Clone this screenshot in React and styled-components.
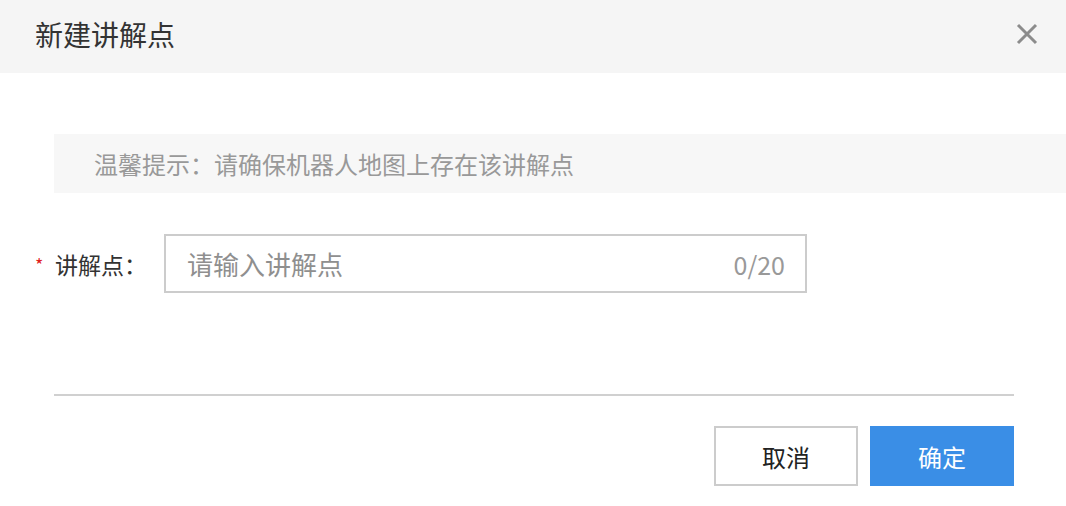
import React from "react";
import styled, { createGlobalStyle } from "styled-components";

const GlobalStyle = createGlobalStyle`
  body {
    margin: 0;
    background: #fff;
    font-family: "Noto Sans CJK SC", "Noto Sans", sans-serif;
  }
`;

const Dialog = styled.div`
  width: 1066px;
  height: 506px;
  background: #fff;
  overflow: hidden;
`;

const Header = styled.div`
  height: 73px;
  background: #f5f5f5;
  display: flex;
  align-items: center;
  justify-content: space-between;
  padding: 0 28px 6px 35px;
  box-sizing: border-box;
`;

const Title = styled.div`
  font-size: 28px;
  color: #333;
  line-height: 1;
`;

const CloseButton = styled.button`
  border: none;
  background: none;
  padding: 0;
  display: flex;
  cursor: pointer;
`;

const Body = styled.div`
  padding: 61px 0 0 54px;
`;

const Tip = styled.div`
  height: 59px;
  background: #f7f7f7;
  display: flex;
  align-items: center;
  padding-left: 40px;
  font-size: 24px;
  color: #999;
`;

const FormRow = styled.div`
  display: flex;
  align-items: center;
  margin: 41px 0 0 -19px;
`;

const Label = styled.label`
  width: 129px;
  display: flex;
  align-items: center;
  font-size: 23px;
  color: #333;
`;

const Required = styled.span`
  color: #e02020;
  font-size: 18px;
  width: 20px;
`;

const InputBox = styled.div`
  width: 643px;
  height: 59px;
  border: 2px solid #ccc;
  box-sizing: border-box;
  display: flex;
  align-items: center;
  padding: 0 20px 0 21px;
`;

const Input = styled.input`
  flex: 1;
  border: none;
  outline: none;
  background: transparent;
  font-family: inherit;
  font-size: 26px;
  color: #333;
  padding: 0;
  &::placeholder {
    color: #8f8f8f;
  }
`;

const Counter = styled.span`
  font-size: 25px;
  color: #999;
`;

const Divider = styled.div`
  width: 960px;
  height: 2px;
  background: #d0d0d0;
  margin-top: 101px;
`;

const Footer = styled.div`
  width: 960px;
  display: flex;
  justify-content: flex-end;
  gap: 12px;
  margin-top: 30px;
`;

const Button = styled.button`
  width: 144px;
  height: 60px;
  box-sizing: border-box;
  font-family: inherit;
  font-size: 24px;
  border: ${(p) => (p.$primary ? "none" : "2px solid #ccc")};
  background: ${(p) => (p.$primary ? "#3a8ee6" : "#fff")};
  color: ${(p) => (p.$primary ? "#fff" : "#222")};
  cursor: pointer;
`;

const CloseIcon = () => (
  <svg width="22" height="22" viewBox="0 0 22 22">
    <path d="M2 2 L20 20 M20 2 L2 20" stroke="#8c8c8c" strokeWidth="3" fill="none" />
  </svg>
);

export default function App() {
  return (
    <Dialog>
      <GlobalStyle />
      <Header>
        <Title>新建讲解点</Title>
        <CloseButton aria-label="关闭">
          <CloseIcon />
        </CloseButton>
      </Header>
      <Body>
        <Tip>温馨提示：请确保机器人地图上存在该讲解点</Tip>
        <FormRow>
          <Label>
            <Required>*</Required>讲解点：
          </Label>
          <InputBox>
            <Input placeholder="请输入讲解点" maxLength={20} />
            <Counter>0/20</Counter>
          </InputBox>
        </FormRow>
        <Divider />
        <Footer>
          <Button>取消</Button>
          <Button $primary>确定</Button>
        </Footer>
      </Body>
    </Dialog>
  );
}
